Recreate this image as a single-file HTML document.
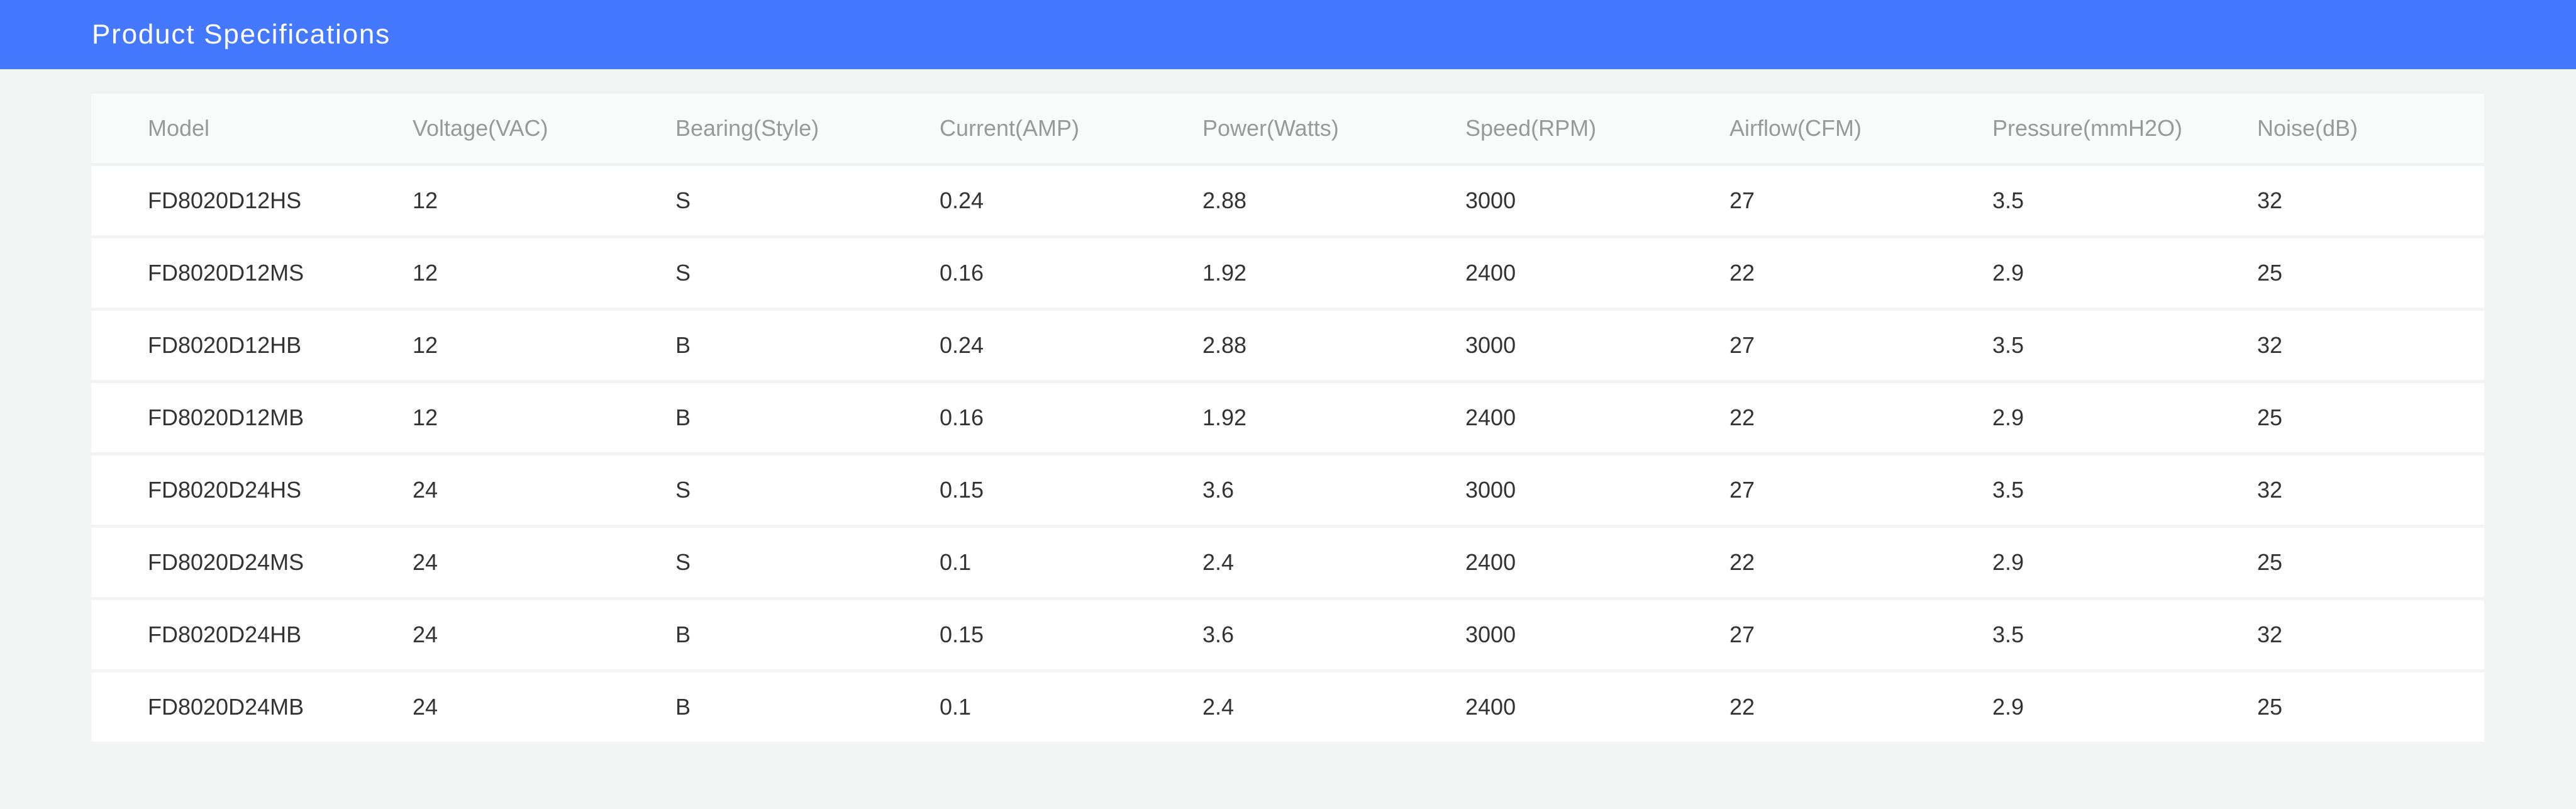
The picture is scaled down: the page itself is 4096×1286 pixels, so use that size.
<!DOCTYPE html>
<html><head><style>
html,body{margin:0;padding:0}
body{width:4096px;height:1286px;background:#f2f4f3;font-family:"Liberation Sans",sans-serif;position:relative;overflow:hidden}
.top{position:absolute;left:0;top:0;width:4096px;height:110px;background:#4479ff}
.top span{position:absolute;left:146px;top:27px;font-size:44px;color:#fff;line-height:56px;letter-spacing:1.8px}
.row{position:absolute;left:145px;width:3805px;height:110px;background:#fff}
.row.h{background:#f9fafa;color:#999}
.row div{position:absolute;top:0;line-height:110px;font-size:36px;color:#333;white-space:nowrap}
.row.h div{color:#999}
</style></head><body>
<div class="top"><span>Product Specifications</span></div>
<div id="t"></div>
<script>
var xs=[235,656,1074,1494,1912,2330,2750,3168,3589];
var rows=[["Model","Voltage(VAC)","Bearing(Style)","Current(AMP)","Power(Watts)","Speed(RPM)","Airflow(CFM)","Pressure(mmH2O)","Noise(dB)"],
["FD8020D12HS","12","S","0.24","2.88","3000","27","3.5","32"],
["FD8020D12MS","12","S","0.16","1.92","2400","22","2.9","25"],
["FD8020D12HB","12","B","0.24","2.88","3000","27","3.5","32"],
["FD8020D12MB","12","B","0.16","1.92","2400","22","2.9","25"],
["FD8020D24HS","24","S","0.15","3.6","3000","27","3.5","32"],
["FD8020D24MS","24","S","0.1","2.4","2400","22","2.9","25"],
["FD8020D24HB","24","B","0.15","3.6","3000","27","3.5","32"],
["FD8020D24MB","24","B","0.1","2.4","2400","22","2.9","25"]];
var h="";
rows.forEach(function(r,i){h+='<div class="row'+(i==0?' h':'')+'" style="top:'+(149+i*115)+'px">';
r.forEach(function(c,j){h+='<div style="left:'+(xs[j]-145)+'px">'+c+'</div>';});h+='</div>';});
document.getElementById("t").innerHTML=h;
</script>
</body></html>
